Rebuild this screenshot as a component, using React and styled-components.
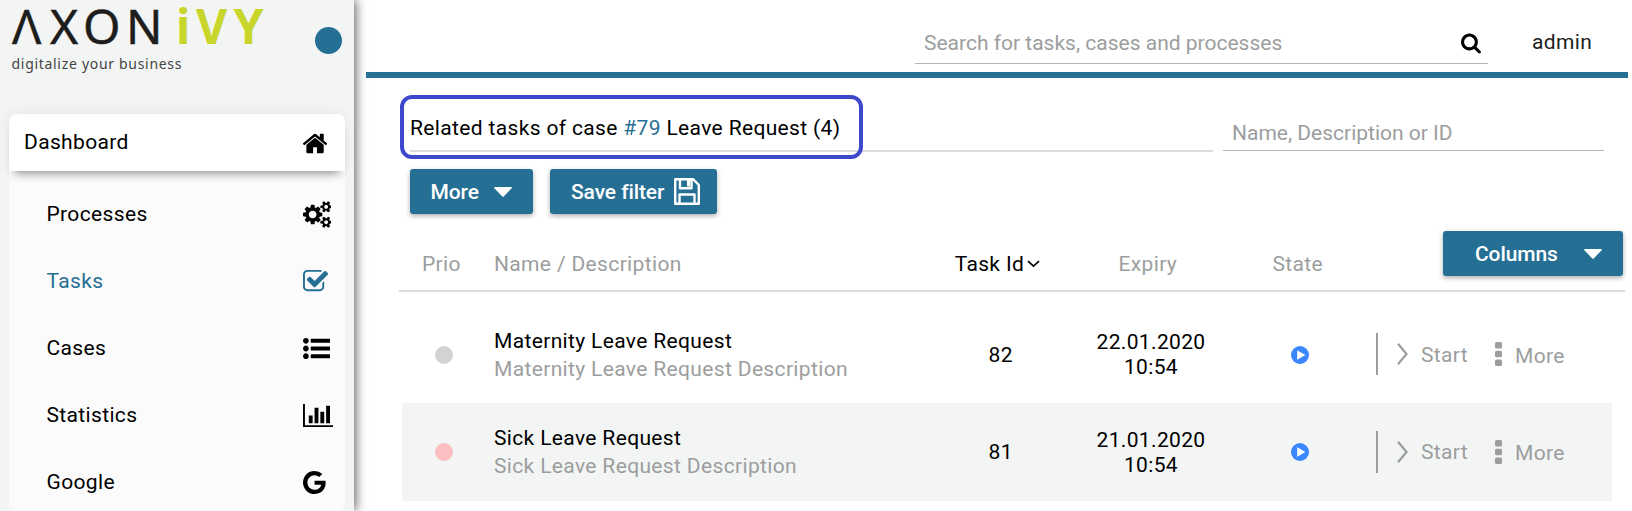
import React from "react";
import styled, { createGlobalStyle, css } from "styled-components";

const BLUE = "#266f94";
const GREY = "#9c9e9e";

const Global = createGlobalStyle`
  *, *::before, *::after { box-sizing: border-box; }
  body {
    margin: 0;
    height: 511px;
    overflow: hidden;
    background: #fff;
    color: #000;
    font: 400 21px/28px Roboto, "Liberation Sans", sans-serif;
    letter-spacing: 0.35px;
  }
  svg { display: block; flex: none; }
`;

const Page = styled.div`
  display: flex;
  width: 1632px;
  height: 511px;
  overflow: hidden;
`;

const Sidebar = styled.aside`
  width: 354px;
  height: 511px;
  flex: none;
  padding: 0 9px;
  background: #f3f5f5;
  box-shadow: 2px 0 10px rgba(0, 0, 0, 0.6);
`;

const Brand = styled.div`
  display: flex;
  justify-content: space-between;
  height: 114px;
`;

const Dot = styled.span`
  width: 27px;
  height: 27px;
  margin: 27px 3px 0 0;
  border-radius: 50%;
  background: ${BLUE};
`;

const Menu = styled.nav`
  height: 397px;
  border-radius: 8px;
  background: #fbfbfb;
`;

const MenuHeader = styled.div`
  display: flex;
  align-items: center;
  height: 57px;
  padding-left: 15px;
  margin-bottom: 10px;
  border-radius: 8px 8px 0 0;
  background: #fff;
  box-shadow: 0 8px 10px -6px rgba(0, 0, 0, 0.42), 0 0 14px rgba(0, 0, 0, 0.07);
`;

const MenuItem = styled.div`
  display: flex;
  align-items: center;
  height: 67px;
  padding-left: 37.5px;
  color: ${(p) => (p.$active ? BLUE : "#000")};
`;

const MenuLabel = styled.span`
  flex: 1;
  padding-bottom: 2px;
`;

const MenuIcon = styled.span`
  width: 42.5px;
  padding-top: ${(p) => p.$drop || 0}px;
`;

const Main = styled.main`
  flex: 1;
  padding: 0 4px 0 12px;
`;

const Header = styled.header`
  display: flex;
  justify-content: flex-end;
  height: 78px;
  border-bottom: 6px solid ${BLUE};
`;

const Search = styled.div`
  display: flex;
  justify-content: space-between;
  width: 573px;
  height: 64px;
  padding: 29px 7px 0 9px;
  border-bottom: 1px solid #b5b5b5;
  color: ${GREY};
  letter-spacing: 0;
`;

const SearchIcon = styled.span`
  padding-top: 3px;
`;

const User = styled.div`
  width: 140px;
  padding: 28px 0 0 44px;
  color: #222;
`;

const Heading = styled.div`
  display: flex;
  gap: 10px;
  height: 74px;
  padding-left: 44px;
`;

const TitleField = styled.div`
  position: relative;
  width: 803px;
  padding-top: 36px;
  border-bottom: 2px solid #dbdcdc;
`;

const Highlight = styled.div`
  position: absolute;
  left: -10px;
  top: 17px;
  width: 463px;
  height: 64px;
  border: 4px solid #3f48cc;
  border-radius: 12px;
`;

const CaseLink = styled.a`
  color: ${BLUE};
`;

const NameFilter = styled.div`
  width: 381px;
  height: 73px;
  padding: 41px 0 0 9px;
  border-bottom: 1px solid #b5b5b5;
  color: ${GREY};
  letter-spacing: 0;
`;

const Actions = styled.div`
  display: flex;
  gap: 17px;
  padding: 17px 0 0 44px;
`;

const Button = styled.button`
  display: flex;
  align-items: center;
  justify-content: space-between;
  width: ${(p) => p.$width}px;
  height: 45px;
  padding: ${(p) => p.$pad || "0 21px 0 20.5px"};
  border: 0;
  border-radius: 3px;
  background: ${BLUE};
  color: #fff;
  font: 500 21px/28px Roboto, "Liberation Sans", sans-serif;
  letter-spacing: -0.1px;
  white-space: nowrap;
  box-shadow: 0 2px 5px rgba(0, 0, 0, 0.32);
`;

const columns = css`
  display: grid;
  grid-template-columns: 92px 427px 162px 142px 157px 1fr;
`;

const TableHead = styled.div`
  ${columns}
  width: 1226px;
  height: 78px;
  margin-left: 33px;
  padding-left: 3px;
  border-bottom: 2px solid #dbdcdc;
  color: ${GREY};
`;

const HeadCell = styled.div`
  display: flex;
  align-items: center;
  gap: 3px;
  padding: ${(p) => p.$pad};
  height: 28px;
  margin-top: 36px;
  color: ${(p) => (p.$sorted ? "#000" : "inherit")};
`;

const ColumnsSlot = styled.div`
  display: flex;
  justify-content: flex-end;
  padding: 17px 2px 0 0;
`;

const Body = styled.div`
  padding: 14px 0 0 36px;
`;

const Row = styled.div`
  ${columns}
  align-items: center;
  width: 1210px;
  height: 97.4px;
  background: ${(p) => (p.$shaded ? "#f3f5f5" : "#fff")};

  &:last-child {
    height: 97.6px;
  }
`;

const Priority = styled.span`
  width: 18px;
  height: 18px;
  margin-left: 33px;
  border-radius: 50%;
  background: ${(p) => p.$color};
`;

const Description = styled.div`
  color: ${GREY};
`;

const TaskId = styled.div`
  padding-left: 67.5px;
`;

const Expiry = styled.div`
  line-height: 25px;
  text-align: center;
  margin-left: -6px;
  padding-top: 0.8px;
`;

const State = styled.div`
  padding-left: 66px;
`;

const RowActions = styled.div`
  display: flex;
  align-items: center;
  height: 42px;
  margin: -1px 0 0 -6px;
  padding-left: 19px;
  border-left: 2px solid ${GREY};
  color: ${GREY};
`;

const ActionLabel = styled.span`
  width: ${(p) => p.$width}px;
  margin-left: 13px;
  padding-top: ${(p) => p.$drop}px;
`;

const FA = {
  home: [97, 1600, "M1472 992v480q0 26-19 45t-45 19h-384v-384h-256v384h-384q-26 0-45-19t-19-45v-480q0-1 .5-3t.5-3l575-474 575 474q1 2 1 6zm223-69l-62 74q-8 9-21 11h-3q-13 0-21-7l-692-577-692 577q-12 8-24 7-13-2-21-11l-62-74q-8-10-7-23.5t11-21.5l719-599q32-26 76-26t76 26l244 204v-195q0-14 9-23t23-9h192q14 0 23 9t9 23v408l219 182q10 8 11 21.5t-7 23.5z"],
  cogs: [0, 1920, "M896 896q0-106-75-181t-181-75-181 75-75 181 75 181 181 75 181-75 75-181zm768 512q0-52-38-90t-90-38-90 38-38 90q0 53 37.5 90.5t90.5 37.5 90.5-37.5 37.5-90.5zm0-1024q0-52-38-90t-90-38-90 38-38 90q0 53 37.5 90.5t90.5 37.5 90.5-37.5 37.5-90.5zm-384 421v185q0 10-7 19.5t-16 10.5l-155 24q-11 35-32 76 34 48 90 115 7 11 7 20 0 12-7 19-23 30-82.5 89.5t-78.5 59.5q-11 0-21-7l-115-90q-37 19-77 31-11 108-23 155-7 24-30 24h-186q-11 0-20-7.5t-10-17.5l-23-153q-34-10-75-31l-118 89q-7 7-20 7-11 0-21-8-144-133-144-160 0-9 7-19 10-14 41-53t47-61q-23-44-35-82l-152-24q-10-1-17-9.5t-7-19.5v-185q0-10 7-19.5t16-10.5l155-24q11-35 32-76-34-48-90-115-7-11-7-20 0-12 7-20 22-30 82-89t79-59q11 0 21 7l115 90q34-18 77-32 11-108 23-154 7-24 30-24h186q11 0 20 7.5t10 17.5l23 153q34 10 75 31l118-89q8-7 20-7 11 0 21 8 144 133 144 160 0 8-7 19-12 16-42 54t-45 60q23 48 34 82l152 23q10 2 17 10.5t7 19.5zm640 533v140q0 16-149 31-12 27-30 52 51 113 51 138 0 4-4 7-122 71-124 71-8 0-46-47t-52-68q-20 2-30 2t-30-2q-14 21-52 68t-46 47q-2 0-124-71-4-3-4-7 0-25 51-138-18-25-30-52-149-15-149-31v-140q0-16 149-31 13-29 30-52-51-113-51-138 0-4 4-7 4-2 35-20t59-34 30-16q8 0 46 46.5t52 67.5q20-2 30-2t30 2q51-71 92-112l6-2q4 0 124 70 4 3 4 7 0 25-51 138 17 23 30 52 149 15 149 31zm0-1024v140q0 16-149 31-12 27-30 52 51 113 51 138 0 4-4 7-122 71-124 71-8 0-46-47t-52-68q-20 2-30 2t-30-2q-14 21-52 68t-46 47q-2 0-124-71-4-3-4-7 0-25 51-138-18-25-30-52-149-15-149-31v-140q0-16 149-31 13-29 30-52-51-113-51-138 0-4 4-7 4-2 35-20t59-34 30-16q8 0 46 46.5t52 67.5q20-2 30-2t30 2q51-71 92-112l6-2q4 0 124 70 4 3 4 7 0 25-51 138 17 23 30 52 149 15 149 31z"],
  check: [64, 1670, "M1472 930v318q0 119-84.5 203.5t-203.5 84.5h-832q-119 0-203.5-84.5t-84.5-203.5v-832q0-119 84.5-203.5t203.5-84.5h832q63 0 117 25 15 7 18 23 3 17-9 29l-49 49q-10 10-23 10-3 0-9-2-23-6-45-6h-832q-66 0-113 47t-47 113v832q0 66 47 113t113 47h832q66 0 113-47t47-113v-254q0-13 9-22l64-64q10-10 23-10 6 0 12 3 20 8 20 29zm231-489l-814 814q-24 24-57 24t-57-24l-430-430q-24-24-24-57t24-57l110-110q24-24 57-24t57 24l263 263 647-647q24-24 57-24t57 24l110 110q24 24 24 57t-24 57z"],
  list: [0, 1792, "M384 1408q0 80-56 136t-136 56-136-56-56-136 56-136 136-56 136 56 56 136zm0-512q0 80-56 136t-136 56-136-56-56-136 56-136 136-56 136 56 56 136zm1408 416v192q0 13-9.500 22.500t-22.500 9.500h-1216q-13 0-22.500-9.500t-9.500-22.500v-192q0-13 9.500-22.500t22.500-9.500h1216q13 0 22.500 9.500t9.500 22.500zm-1408-928q0 80-56 136t-136 56-136-56-56-136 56-136 136-56 136 56 56 136zm1408 416v192q0 13-9.500 22.500t-22.500 9.500h-1216q-13 0-22.500-9.500t-9.500-22.500v-192q0-13 9.500-22.500t22.500-9.500h1216q13 0 22.500 9.500t9.500 22.500zm0-512v192q0 13-9.500 22.500t-22.500 9.500h-1216q-13 0-22.500-9.500t-9.500-22.500v-192q0-13 9.500-22.500t22.500-9.500h1216q13 0 22.500 9.500t9.500 22.500z"],
  chart: [0, 2048, "M640 896v512h-256v-512h256zm384-512v1024h-256v-1024h256zm1024 1152v128h-2048v-1536h128v1408h1920zm-640-896v768h-256v-768h256zm384-384v1152h-256v-1152h256z"],
  google: [128, 1536, "M896 786h725q12 67 12 128 0 217-91 387.5t-259.5 266.5-386.5 96q-157 0-299-60.5t-245-163.5-163.5-245-60.5-299 60.5-299 163.5-245 245-163.5 299-60.5q300 0 515 201l-209 201q-123-119-306-119-129 0-238.5 65t-173.5 176.5-64 243.5 64 243.5 173.5 176.5 238.5 65q87 0 160-24t120-60 82-82 51.5-87 22.5-78h-436v-264z"],
  search: [64, 1664, "M1216 832q0-185-131.5-316.5t-316.5-131.5-316.5 131.5-131.5 316.5 131.5 316.5 316.5 131.5 316.5-131.5 131.5-316.5zm512 832q0 52-38 90t-90 38q-54 0-90-38l-343-342q-179 124-399 124-143 0-273.5-55.5t-225-150-150-225-55.5-273.5 55.5-273.5 150-225 225-150 273.5-55.5 273.5 55.5 225 150 150 225 55.5 273.5q0 220-124 399l343 343q37 37 37 90z"],
};

function Icon({ name, size = 27, fill = "currentColor" }) {
  const [x, width, d] = FA[name];
  return (
    <svg width={(size * width) / 1792} height={size} viewBox={`${x} 0 ${width} 1792`} fill={fill}>
      <path d={d} />
    </svg>
  );
}

function Logo() {
  return (
    <svg width="260" height="80" viewBox="9 0 260 80" fontFamily='"Noto Sans", "Open Sans", sans-serif' letterSpacing="0">
      <text y="44.300" x="12 50 83 126" fontSize="48" fill="#1d1d1b" stroke="#1d1d1b" strokeWidth="0.500">ΛXON</text>
      <text y="44.300" x="176 196 233.500" fontSize="48" fontWeight="700" fill="#c8d62b">iVY</text>
      <text y="69" x="11.500" fontSize="14" textLength="170" fill="#444">digitalize your business</text>
    </svg>
  );
}

const Caret = () => (
  <svg width="18" height="10" viewBox="0 0 18 10" fill="#fff">
    <path d="M.8 0h16.400q1 .3.4 1.200L9.700 9.500q-.7.7-1.400 0L.4 1.200Q-.2.3.8 0z" />
  </svg>
);

const SaveIcon = () => (
  <svg width="26" height="27" viewBox="0 0 26 27" fill="none" stroke="#fff" strokeWidth="2.400" strokeLinejoin="round">
    <path d="M1.200 1.200h17.800L24.800 7v18.800H1.200zM6 1.200v9h11.500v-9M5.500 25.800V16.500h15v9.300" />
    <path d="M14.500 2v6.500" strokeWidth="3" />
  </svg>
);

const SortIcon = () => (
  <svg width="13" height="8" viewBox="0 0 13 8" fill="none" stroke="#000" strokeWidth="1.700">
    <path d="M1 1.200l5.500 5 5.500-5" />
  </svg>
);

const PlayIcon = () => (
  <svg width="18" height="18" viewBox="0 0 18 18">
    <circle cx="9" cy="9" r="9" fill="#3a86ff" />
    <path d="M6.200 4.200v9.600l8.200-4.800z" fill="#fff" />
  </svg>
);

const StartIcon = () => (
  <svg width="11" height="22" viewBox="0 0 11 22" fill="none" stroke={GREY} strokeWidth="2.200">
    <path d="M1 .8l8.500 10.200L1 21.200" />
  </svg>
);

const DotsIcon = () => (
  <svg width="7" height="24" viewBox="0 0 7 24" fill={GREY}>
    <rect width="7" height="6.500" rx="1.500" />
    <rect y="8.700" width="7" height="6.500" rx="1.500" />
    <rect y="17.400" width="7" height="6.500" rx="1.500" />
  </svg>
);

const MENU = [
  ["Processes", "cogs"],
  ["Tasks", "check"],
  ["Cases", "list"],
  ["Statistics", "chart"],
  ["Google", "google"],
];

const TASKS = [
  { name: "Maternity Leave Request", id: 82, date: "22.01.2020", priority: "#d3d3d3" },
  { name: "Sick Leave Request", id: 81, date: "21.01.2020", priority: "#fabfc0" },
];

function TaskRow({ task, shaded }) {
  return (
    <Row $shaded={shaded}>
      <Priority $color={task.priority} />
      <div>
        <div>{task.name}</div>
        <Description>{task.name} Description</Description>
      </div>
      <TaskId>{task.id}</TaskId>
      <Expiry>
        {task.date}
        <br />
        10:54
      </Expiry>
      <State><PlayIcon /></State>
      <RowActions>
        <StartIcon />
        <ActionLabel $width={74} $drop={0.8}>Start</ActionLabel>
        <DotsIcon />
        <ActionLabel $drop={3}>More</ActionLabel>
      </RowActions>
    </Row>
  );
}

export default function App() {
  return (
    <Page>
      <Global />
      <Sidebar>
        <Brand>
          <Logo />
          <Dot />
        </Brand>
        <Menu>
          <MenuHeader>
            <MenuLabel>Dashboard</MenuLabel>
            <MenuIcon $drop={2}><Icon name="home" /></MenuIcon>
          </MenuHeader>
          {MENU.map(([label, icon]) => (
            <MenuItem key={label} $active={label === "Tasks"}>
              <MenuLabel>{label}</MenuLabel>
              <MenuIcon><Icon name={icon} /></MenuIcon>
            </MenuItem>
          ))}
        </Menu>
      </Sidebar>
      <Main>
        <Header>
          <Search>
            <span>Search for tasks, cases and processes</span>
            <SearchIcon><Icon name="search" size={21.5} fill="#000" /></SearchIcon>
          </Search>
          <User>admin</User>
        </Header>
        <Heading>
          <TitleField>
            Related tasks of case <CaseLink>#79</CaseLink> Leave Request (4)
            <Highlight />
          </TitleField>
          <NameFilter>Name, Description or ID</NameFilter>
        </Heading>
        <Actions>
          <Button $width={123}>More <Caret /></Button>
          <Button $width={167} $pad="0 17px 0 21px">Save filter <SaveIcon /></Button>
        </Actions>
        <TableHead>
          <HeadCell $pad="0 0 0 20px">Prio</HeadCell>
          <HeadCell>Name / Description</HeadCell>
          <HeadCell $sorted $pad="0 0 0 33.7px">Task Id <SortIcon /></HeadCell>
          <HeadCell $pad="0 0 0 35.5px">Expiry</HeadCell>
          <HeadCell $pad="0 0 0 47.5px">State</HeadCell>
          <ColumnsSlot>
            <Button $width={180} $pad="0 21px 0 32px">Columns <Caret /></Button>
          </ColumnsSlot>
        </TableHead>
        <Body>
          {TASKS.map((task, i) => (
            <TaskRow key={task.id} task={task} shaded={i % 2 === 1} />
          ))}
        </Body>
      </Main>
    </Page>
  );
}
